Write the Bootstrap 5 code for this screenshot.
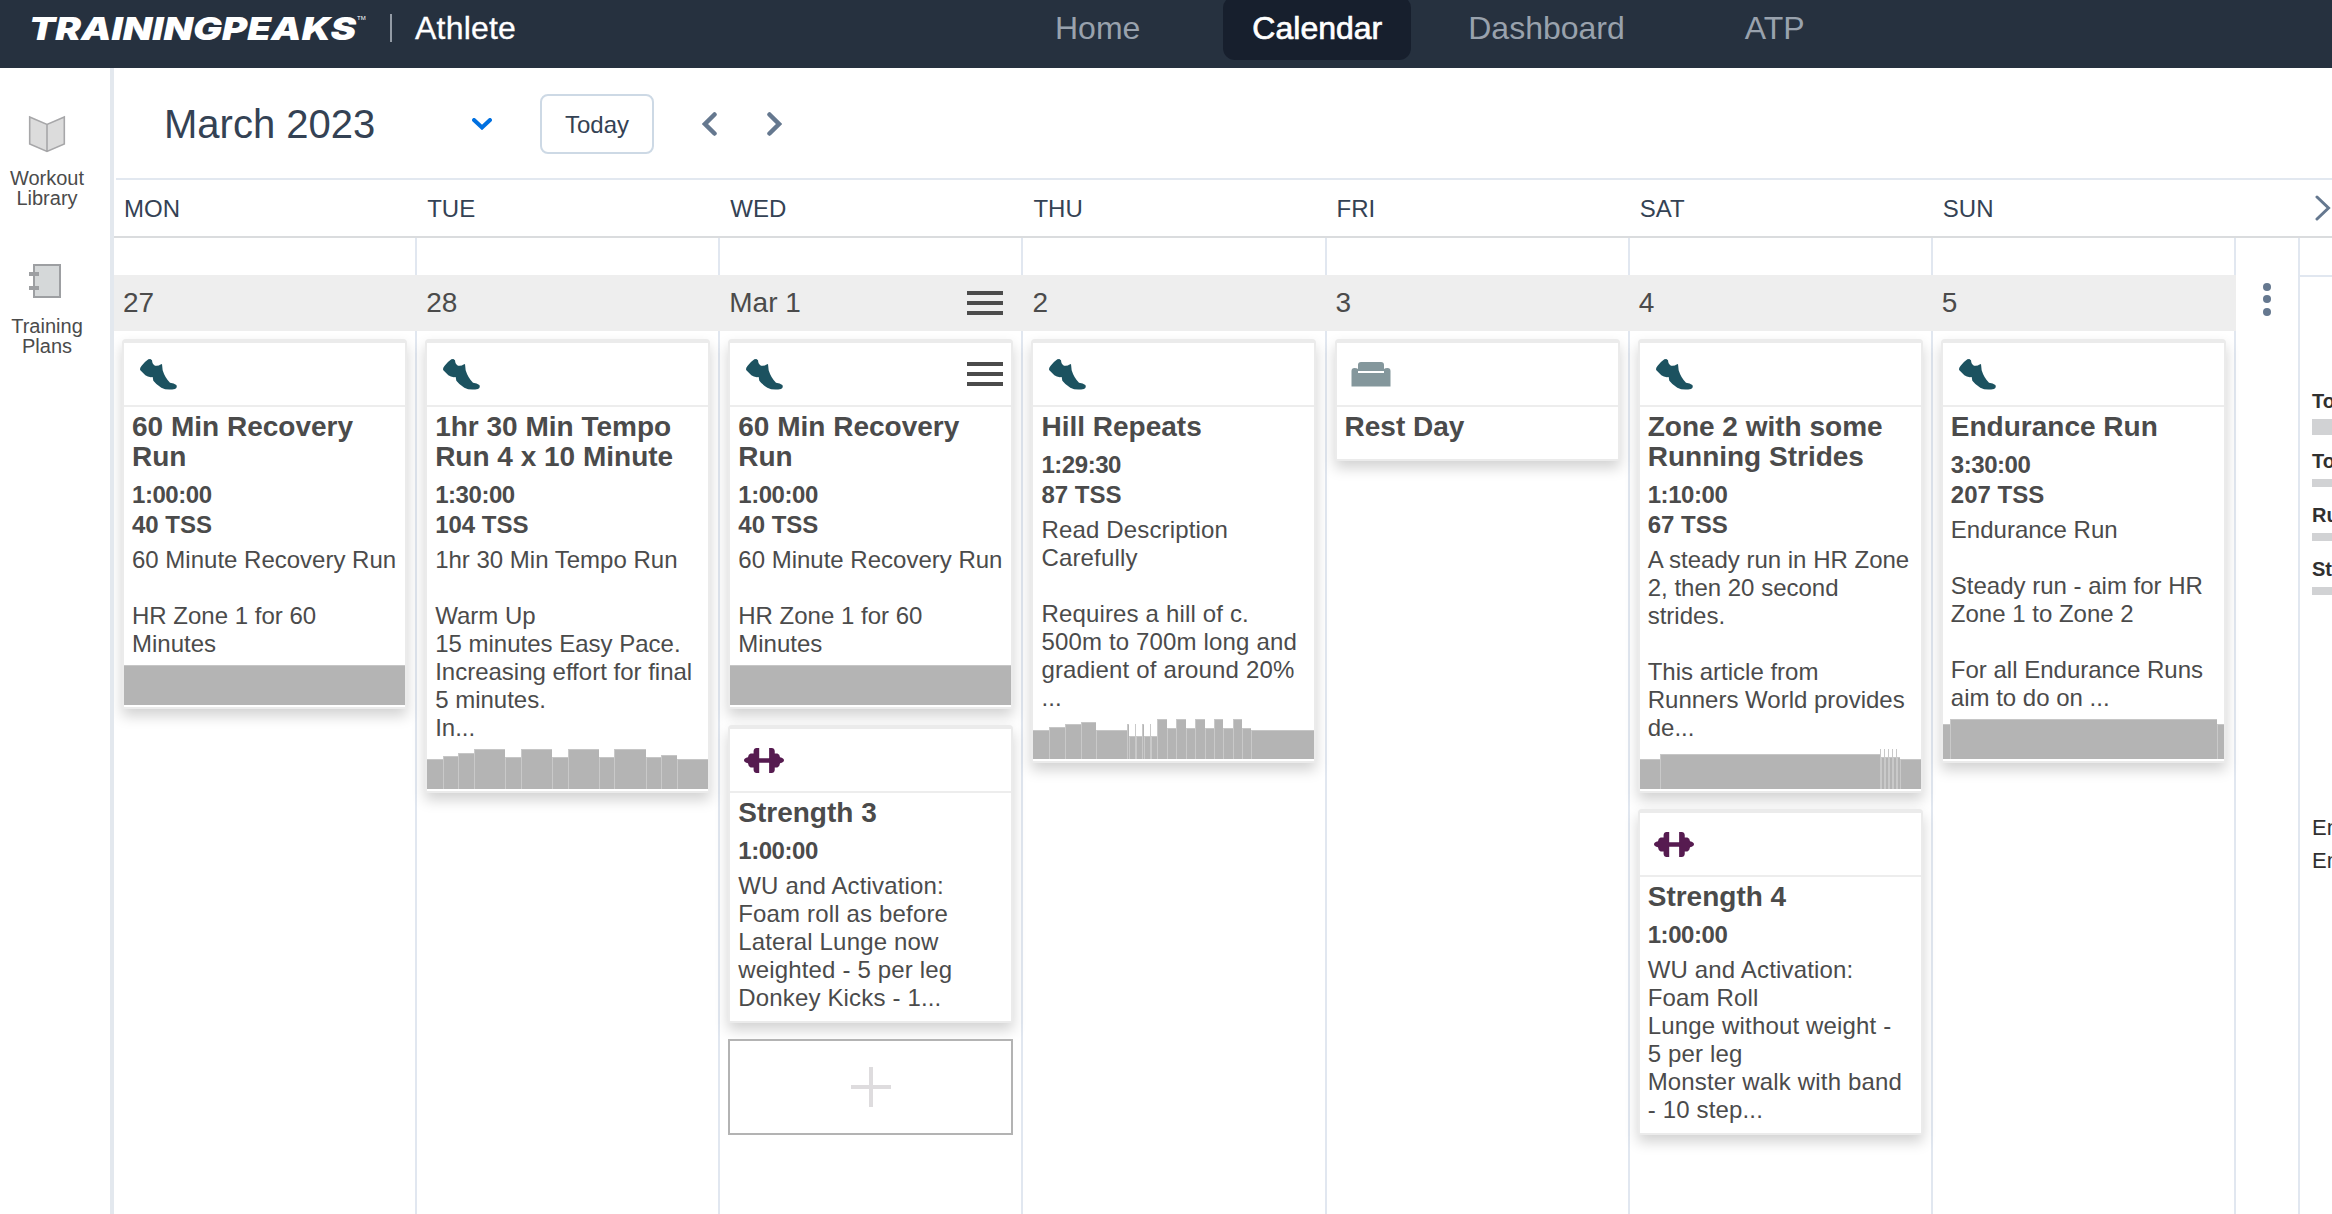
<!DOCTYPE html>
<html lang="en">
<head>
<meta charset="utf-8">
<meta name="viewport" content="width=device-width, initial-scale=1">
<title>TrainingPeaks Calendar</title>
<link href="https://cdn.jsdelivr.net/npm/bootstrap@5.3.0/dist/css/bootstrap.min.css" rel="stylesheet">
<style>
  body { font-family: "Liberation Sans", Arial, sans-serif; color: #4b4b4b; background: #fff; height: 1214px; overflow: hidden; }
  svg { display: block; flex: none; }
  .topbar { height: 68px; background: #26313f; padding: 0; font-size: 32px; flex: none; }
  .brand-area { width: 1026px; height: 56px; padding-left: 29px; }
  .brand-rule { width: 2px; height: 28px; background: #939ba5; margin-left: 23px; margin-right: 23px; }
  .topbar .role { color: #fff; letter-spacing: .2px; -webkit-text-stroke: .3px #fff; }
  .topbar .navbar-nav .nav-link { color: #99a2ad; line-height: 64px; height: 64px; margin-top: -4px; padding: 0 29px; border-radius: 12px; }
  .topbar .navbar-nav .nav-link.active { background: #171f2d; color: #fff; -webkit-text-stroke: .7px #fff; }
  .tools { width: 114px; border-right: 4px solid #e3e8ee; padding-right: 16px; flex: none; }
  .tool-item { font-size: 20px; line-height: 20px; height: 148px; }
  .monthbar { height: 112px; border-bottom: 2px solid #e2e8f0; margin-left: 2px; padding: 2px 0 0 48px; color: #344254; }
  .month-title { font-size: 40px; width: 308px; line-height: 48px; }
  .btn-today { width: 114px; height: 60px; border: 2px solid #cdd9e5; border-radius: 8px; font-size: 24px; color: #344254; background: #fff; padding: 1px 0 0; margin-left: 48px; }
  .weekdays { height: 58px; border-bottom: 2px solid #dadcde; font-size: 24px; line-height: 58px; color: #344254; }
  .day-grid { width: 2122px; display: grid; grid-template-columns: repeat(7, minmax(0, 1fr)); flex: none; }
  .weekdays .day-grid > div { padding-left: 10px; }
  .strip { height: 37px; }
  .strip, .day-body { border-right: 2px solid #e1e7f0; }
  .date-row { height: 56px; background: #eee; font-size: 28px; padding: 0 20px 0 9px; }
  .day-body { padding: 8px 8px 0; gap: 16px; }
  .workout { width: 285px; border: 2px solid #ebebeb; border-radius: 4px 4px 0 0; background: #fff; box-shadow: 0 7px 14px rgba(0,0,0,.18); color: #4b4b4b; }
  .workout-top { height: 66px; border-top: 2px solid #ebebeb; border-bottom: 2px solid #ededed; padding-left: 14px; padding-right: 8px; }
  .shoe-icon { margin-left: 2px; }
  .workout-text { padding: 5px 0 0 8px; white-space: pre; }
  .workout-title { font-size: 28px; line-height: 30px; font-weight: 700; margin: 0; }
  .stats { font-size: 24px; line-height: 30px; font-weight: 700; margin-top: 8px; }
  .stats .time { letter-spacing: -.45px; }
  .desc { font-size: 24px; line-height: 28px; margin: 6px 0 0; }
  .loose { letter-spacing: .16px; }
  .profile { height: 40px; margin: 7px 0 2px; }
  .seg { background: #b4b4b4; border-top: 1px solid #c6c6c6; border-left: 1px solid #c9c9c9; flex: none; }
  .seg:first-child { border-left: 0; }
  .burger { width: 36px; height: 24px; border-top: 4px solid #4b4b4b; border-bottom: 4px solid #4b4b4b; padding-top: 6px; }
  .burger::before { content: ""; display: block; height: 4px; background: #4b4b4b; }
  .add-box { width: 285px; height: 96px; border: 2px solid #b3b3b3; background: #fff; }
  .gutter { width: 64px; border-right: 2px solid #e1e7f0; flex: none; padding-top: 45px; padding-left: 27px; gap: 4px; }
  .gutter span { width: 8px; height: 8px; border-radius: 50%; background: #65788f; margin-bottom: .3px; }
  .summary { color: #303030; white-space: nowrap; overflow: hidden; }
  .summary-head { height: 39px; border-bottom: 2px solid #e1e7f0; }
  .metric { font-size: 20px; line-height: 24px; font-weight: 700; padding-left: 12px; }
  .meter { background: #d1d2d4; height: 8px; }
</style>
<script src="https://cdn.jsdelivr.net/npm/bootstrap@5.3.0/dist/js/bootstrap.bundle.min.js"></script>
</head>
<body class="d-flex flex-column">
<svg width="0" height="0" class="position-absolute" aria-hidden="true">
  <symbol id="shoe" viewBox="0 0 111 93"><path fill="#1c5260" d="M31 0L36 4Q37 17 45 20Q58 21 60 17L66 15L68 34Q75 57 90 71Q102 72 109 78Q113 86 105 90Q80 95 64 86Q48 76 40 65L38 54Q25 56 16 49L1 34Q-2 27 5 20Q16 7 25 1Z"/></symbol>
  <symbol id="dumbbell" viewBox="0 0 121 75"><path fill="#561b50" d="M46 0H38Q30 0 29 9V16H20Q13 18 12 28Q0 31 0 37Q0 43 12 46Q13 56 20 59H29V66Q30 75 38 75H46V44H76V75H84Q92 75 93 66V59H101Q108 56 109 46Q121 43 121 37Q121 31 109 28Q108 18 101 16H93V9Q92 0 84 0H76V31H46Z"/></symbol>
</svg>

<nav class="topbar navbar navbar-expand align-items-start flex-nowrap">
  <div class="brand-area d-flex align-items-center">
    <svg width="338" height="32" viewBox="0 0 338 32" overflow="visible" role="img" aria-label="TrainingPeaks">
      <text x="0" y="27.500" textLength="327" lengthAdjust="spacingAndGlyphs" font-family="Inter, 'Liberation Sans', sans-serif" font-weight="900" font-style="italic" font-size="32" fill="#fff">TRAININGPEAKS</text>
      <text x="328" y="8" font-family="Liberation Sans, sans-serif" font-size="6" fill="#fff">TM</text>
    </svg>
    <div class="brand-rule"></div>
    <span class="role">Athlete</span>
  </div>
  <div class="navbar-nav">
    <a class="nav-link" href="#" style="margin-right:54px">Home</a>
    <a class="nav-link active" href="#" style="margin-right:28px">Calendar</a>
    <a class="nav-link" href="#" style="margin-right:62px">Dashboard</a>
    <a class="nav-link" href="#">ATP</a>
  </div>
</nav>

<div class="d-flex flex-grow-1">
  <aside class="tools d-flex flex-column text-center">
    <div class="tool-item d-flex flex-column align-items-center" style="padding-top:47px">
      <svg width="38" height="38" viewBox="0 0 38 38"><path d="M1.700 2L19 9.500L36.300 2V29L19 36.500L1.700 29ZM19 9.500V36.500" fill="#dcdcdc" stroke="#a7a7a9" stroke-width="1.600"/></svg>
      <div style="margin-top:15px">Workout<br>Library</div>
    </div>
    <div class="tool-item d-flex flex-column align-items-center" style="padding-top:48px">
      <svg width="34" height="34" viewBox="0 0 34 34" style="margin-right:4px"><path d="M6 1H32V33H6Z" fill="#d5d8d9" stroke="#9d9fa2" stroke-width="2"/><path d="M1 8h10v4H1zM1 22h10v4H1z" fill="#9d9fa2"/></svg>
      <div style="margin-top:18px">Training<br>Plans</div>
    </div>
  </aside>

  <main class="d-flex flex-column flex-grow-1 overflow-hidden">
    <div class="monthbar d-flex align-items-center">
      <div class="month-title">March 2023</div>
      <svg width="20" height="12" viewBox="0 0 20 12"><path d="M2 2L10 9.500L18 2" fill="none" stroke="#0070e0" stroke-width="4" stroke-linecap="round"/></svg>
      <button class="btn btn-today" type="button">Today</button>
      <svg width="15" height="24" viewBox="0 0 15 24" style="margin-left:48px"><path d="M12.500 2.500L3 12L12.500 21.500" fill="none" stroke="#65788f" stroke-width="4.500" stroke-linecap="round"/></svg>
      <svg width="15" height="24" viewBox="0 0 15 24" style="margin-left:50px"><path d="M2.500 2.500L12 12L2.500 21.500" fill="none" stroke="#65788f" stroke-width="4.500" stroke-linecap="round"/></svg>
    </div>

    <div class="weekdays d-flex">
      <div class="day-grid"><div>MON</div><div>TUE</div><div>WED</div><div>THU</div><div>FRI</div><div>SAT</div><div>SUN</div></div>
      <svg width="16" height="26" viewBox="0 0 16 26" style="margin:15px 0 0 79px"><path d="M2 2L13.500 13L2 24" fill="none" stroke="#65788f" stroke-width="3" stroke-linecap="round"/></svg>
    </div>

    <div class="d-flex flex-grow-1">
      <div class="day-grid">
        <section class="d-flex flex-column">
          <div class="strip"></div>
          <div class="date-row d-flex align-items-center justify-content-between">27</div>
          <div class="day-body d-flex flex-column flex-grow-1">
            <article class="workout">
              <div class="workout-top d-flex align-items-center justify-content-between"><svg class="shoe-icon" width="37" height="31"><use href="#shoe"/></svg></div>
              <div class="workout-text"><h2 class="workout-title">60 Min Recovery
Run</h2><div class="stats"><div class="time">1:00:00</div><div>40 TSS</div></div><p class="desc">60 Minute Recovery Run

HR Zone 1 for 60
Minutes</p></div>
              <div class="profile d-flex align-items-end" data-profile="281:40"></div>
            </article>
          </div>
        </section>

        <section class="d-flex flex-column">
          <div class="strip"></div>
          <div class="date-row d-flex align-items-center justify-content-between">28</div>
          <div class="day-body d-flex flex-column flex-grow-1">
            <article class="workout">
              <div class="workout-top d-flex align-items-center justify-content-between"><svg class="shoe-icon" width="37" height="31"><use href="#shoe"/></svg></div>
              <div class="workout-text"><h2 class="workout-title">1hr 30 Min Tempo
Run 4 x 10 Minute</h2><div class="stats"><div class="time">1:30:00</div><div>104 TSS</div></div><p class="desc">1hr 30 Min Tempo Run

Warm Up
15 minutes Easy Pace.
Increasing effort for final
5 minutes.
In...</p></div>
              <div class="profile d-flex align-items-end" data-profile="1:30 1:33 1:36 2:40 1:32 2:40 1:32 2:40 1:32 2:40 1:32 1:34 2:30"></div>
            </article>
          </div>
        </section>

        <section class="d-flex flex-column">
          <div class="strip"></div>
          <div class="date-row d-flex align-items-center justify-content-between">Mar 1<div class="burger"></div></div>
          <div class="day-body d-flex flex-column flex-grow-1">
            <article class="workout">
              <div class="workout-top d-flex align-items-center justify-content-between"><svg class="shoe-icon" width="37" height="31"><use href="#shoe"/></svg><div class="burger"></div></div>
              <div class="workout-text"><h2 class="workout-title">60 Min Recovery
Run</h2><div class="stats"><div class="time">1:00:00</div><div>40 TSS</div></div><p class="desc">60 Minute Recovery Run

HR Zone 1 for 60
Minutes</p></div>
              <div class="profile d-flex align-items-end" data-profile="281:40"></div>
            </article>
            <article class="workout" style="padding-bottom:9px">
              <div class="workout-top d-flex align-items-center"><svg width="40" height="25"><use href="#dumbbell"/></svg></div>
              <div class="workout-text"><h2 class="workout-title">Strength 3</h2><div class="stats"><div class="time">1:00:00</div></div><p class="desc loose">WU and Activation:
Foam roll as before
Lateral Lunge now
weighted - 5 per leg
Donkey Kicks - 1...</p></div>
            </article>
            <div class="add-box d-flex align-items-center justify-content-center">
              <svg width="40" height="40" viewBox="0 0 40 40"><path d="M20 0V40M0 20H40" stroke="#dedcde" stroke-width="4"/></svg>
            </div>
          </div>
        </section>

        <section class="d-flex flex-column">
          <div class="strip"></div>
          <div class="date-row d-flex align-items-center justify-content-between">2</div>
          <div class="day-body d-flex flex-column flex-grow-1">
            <article class="workout">
              <div class="workout-top d-flex align-items-center justify-content-between"><svg class="shoe-icon" width="37" height="31"><use href="#shoe"/></svg></div>
              <div class="workout-text"><h2 class="workout-title">Hill Repeats</h2><div class="stats"><div class="time">1:29:30</div><div>87 TSS</div></div><p class="desc loose">Read Description
Carefully

Requires a hill of c.
500m to 700m long and
gradient of around 20%
...</p></div>
              <div class="profile d-flex align-items-end" data-profile="48:29 47:32 48:35 46:37 94:29 4:35 19:23 4:35 19:23 4:35 19:23 4:35 17:23 29:40 29:31 29:40 28:31 29:40 28:31 28:40 29:31 28:40 28:31 189:29"></div>
            </article>
          </div>
        </section>

        <section class="d-flex flex-column">
          <div class="strip"></div>
          <div class="date-row d-flex align-items-center justify-content-between">3</div>
          <div class="day-body d-flex flex-column flex-grow-1">
            <article class="workout" style="padding-bottom:17px">
              <div class="workout-top d-flex align-items-center"><svg width="40" height="25" viewBox="0 0 40 25"><path fill="#84979c" d="M10 0H30Q33 0 33 3V7Q34 6 36.500 6Q39.500 6 39.500 9V24.500H.5V9Q.5 6 3.500 6Q6 6 7 7V3Q7 0 10 0Z"/><path d="M7 9H33V11H7Z" fill="#fff"/></svg></div>
              <div class="workout-text"><h2 class="workout-title">Rest Day</h2></div>
            </article>
          </div>
        </section>

        <section class="d-flex flex-column">
          <div class="strip"></div>
          <div class="date-row d-flex align-items-center justify-content-between">4</div>
          <div class="day-body d-flex flex-column flex-grow-1">
            <article class="workout">
              <div class="workout-top d-flex align-items-center justify-content-between"><svg class="shoe-icon" width="37" height="31"><use href="#shoe"/></svg></div>
              <div class="workout-text"><h2 class="workout-title">Zone 2 with some
Running Strides</h2><div class="stats"><div class="time">1:10:00</div><div>67 TSS</div></div><p class="desc">A steady run in HR Zone
2, then 20 second
strides.

This article from
Runners World provides
de...</p></div>
              <div class="profile d-flex align-items-end" data-profile="20:30 220:35 1:40 3:32 1:40 3:32 1:40 3:32 1:40 3:32 1:40 3:32 21:30"></div>
            </article>
            <article class="workout" style="padding-bottom:9px">
              <div class="workout-top d-flex align-items-center"><svg width="40" height="25"><use href="#dumbbell"/></svg></div>
              <div class="workout-text"><h2 class="workout-title">Strength 4</h2><div class="stats"><div class="time">1:00:00</div></div><p class="desc loose">WU and Activation:
Foam Roll
Lunge without weight -
5 per leg
Monster walk with band
- 10 step...</p></div>
            </article>
          </div>
        </section>

        <section class="d-flex flex-column">
          <div class="strip"></div>
          <div class="date-row d-flex align-items-center justify-content-between">5</div>
          <div class="day-body d-flex flex-column flex-grow-1">
            <article class="workout">
              <div class="workout-top d-flex align-items-center justify-content-between"><svg class="shoe-icon" width="37" height="31"><use href="#shoe"/></svg></div>
              <div class="workout-text"><h2 class="workout-title">Endurance Run</h2><div class="stats"><div class="time">3:30:00</div><div>207 TSS</div></div><p class="desc">Endurance Run

Steady run - aim for HR
Zone 1 to Zone 2

For all Endurance Runs
aim to do on ...</p></div>
              <div class="profile d-flex align-items-end" data-profile="7:35 267:40 7:35"></div>
            </article>
          </div>
        </section>
      </div>

      <div class="gutter d-flex flex-column"><span></span><span></span><span></span></div>

      <aside class="summary flex-grow-1">
        <div class="summary-head"></div>
        <div class="metric" style="padding-top:112px">To<div class="meter" style="height:16px;margin-top:6px"></div></div>
        <div class="metric" style="padding-top:14px">To<div class="meter" style="margin-top:6px"></div></div>
        <div class="metric" style="padding-top:16px">Ru<div class="meter" style="margin-top:6px"></div></div>
        <div class="metric" style="padding-top:16px">St<div class="meter" style="margin-top:6px"></div></div>
        <div style="font-size:22px;line-height:33px;padding:216px 0 0 12px">En<br>En</div>
      </aside>
    </div>
  </main>
</div>
<script>
  // Build each workout profile from "duration:height" pairs scaled to the card width.
  document.querySelectorAll('[data-profile]').forEach(function (el) {
    var steps = el.dataset.profile.split(' ').map(function (s) { return s.split(':').map(Number); });
    var total = steps.reduce(function (sum, s) { return sum + s[0]; }, 0);
    steps.forEach(function (s) {
      var bar = document.createElement('div');
      bar.className = 'seg';
      bar.style.width = (s[0] / total * 100) + '%';
      bar.style.height = s[1] + 'px';
      el.appendChild(bar);
    });
  });
</script>
</body>
</html>
